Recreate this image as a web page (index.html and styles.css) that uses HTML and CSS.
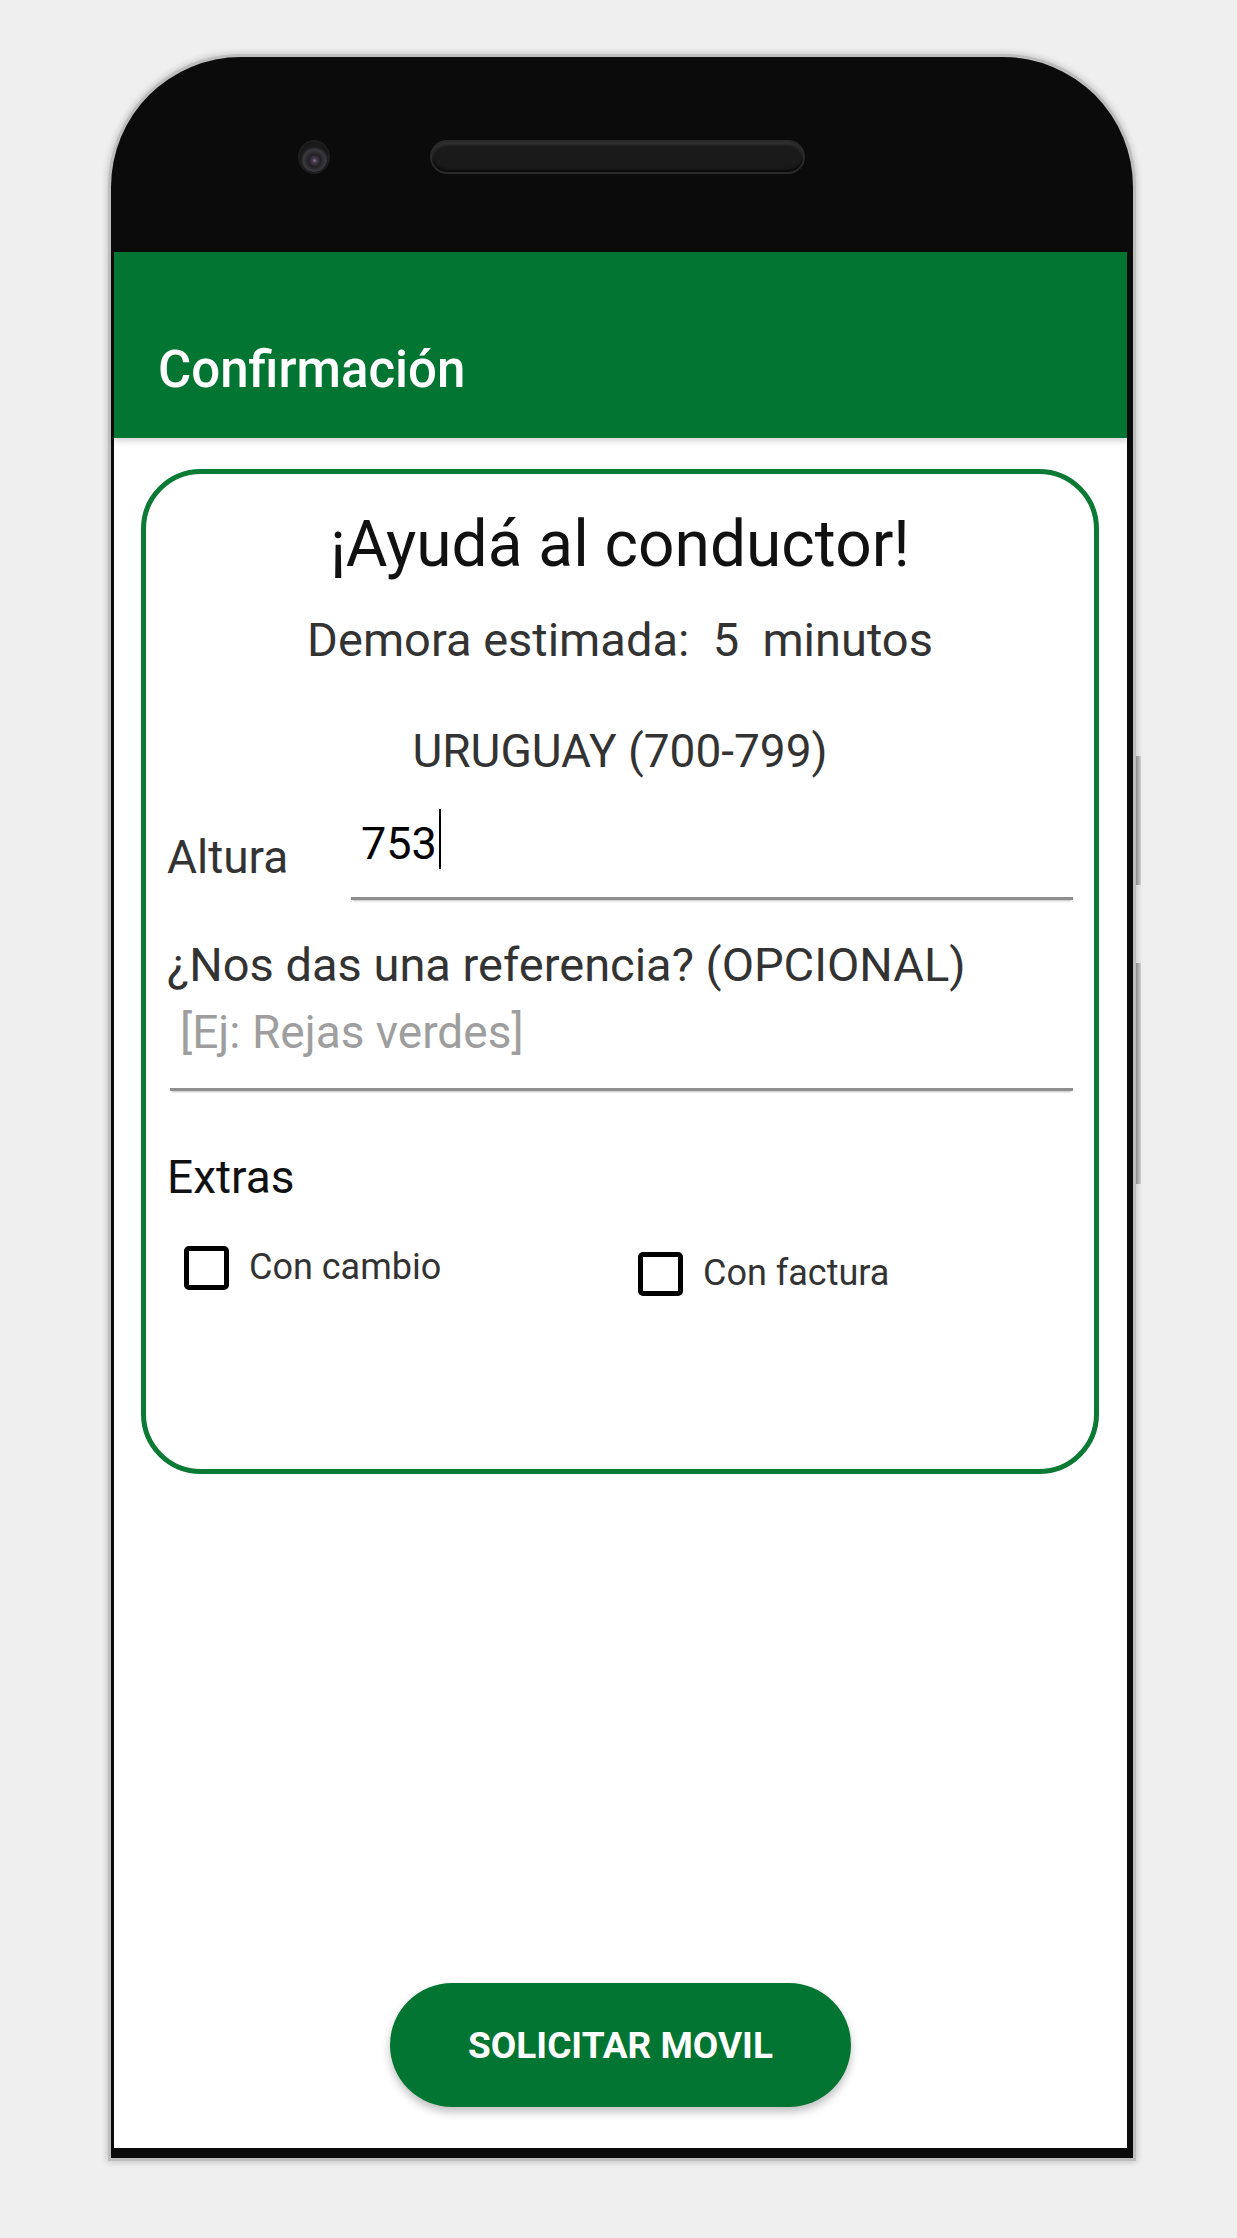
FILE: index.html
```
<!DOCTYPE html>
<html lang="es">
<head>
    <meta charset="UTF-8">
    <meta name="viewport" content="width=device-width, initial-scale=1.0">
    <title>Confirmación</title>
    <link rel="stylesheet" href="styles.css">
</head>
<body>

<div class="phone">
    <div class="bezel">
        <span class="camera"></span>
        <span class="speaker"></span>
    </div>

    <div class="screen">
        <header class="toolbar">
            <h1>Confirmación</h1>
        </header>

        <main class="content">
            <section class="card">
                <h2 class="card-title">¡Ayudá al conductor!</h2>
                <p class="eta">Demora estimada:  5  minutos</p>
                <p class="street">URUGUAY (700-799)</p>

                <div class="field-row">
                    <label class="field-label altura-label">Altura</label>
                    <div class="field field-number">753<span class="cursor"></span></div>
                </div>

                <label class="field-label ref-label">¿Nos das una referencia? (OPCIONAL)</label>
                <div class="field field-ref">
                    <span class="placeholder">[Ej: Rejas verdes]</span>
                </div>

                <p class="extras">Extras</p>
                <div class="checks">
                    <label class="check"><span class="box"></span>Con cambio</label>
                    <label class="check check-low"><span class="box"></span>Con factura</label>
                </div>
            </section>

            <button class="btn-request">SOLICITAR MOVIL</button>
        </main>
    </div>

    <span class="side-btn side-btn-volume"></span>
    <span class="side-btn side-btn-power"></span>
</div>

</body>
</html>
```

FILE: styles.css
```
/* Base */
body {
    margin: 0;
    height: 2238px;
    background-color: #efefef;
    font-family: 'Roboto', 'Liberation Sans', sans-serif;
    overflow: hidden;
}

/* Phone frame */
.phone {
    position: relative;
    width: 1022px;
    margin: 57px 0 0 111px;
    padding: 0 6px 10px 3px;
    box-sizing: border-box;
    background-color: #0b0b0b;
    border-radius: 130px 130px 0 0;
    box-shadow: 0 0 0 3px #bdbdbd, 0 0 6px 4px rgba(0, 0, 0, 0.18);
}
.bezel {
    height: 195px;
    padding: 5px 0 0 186px;
    box-sizing: border-box;
    display: flex;
    align-items: center;
}
.camera {
    width: 28px;
    height: 30px;
    border-radius: 50%;
    background: radial-gradient(circle at 52% 62%, #a07aa0 0, #4a3f52 2px, #222026 6px, #3a3a3e 11px, #1a1a1a 14px);
    box-shadow: 0 0 0 2px #1e1e1e;
}
.speaker {
    width: 371px;
    height: 30px;
    margin-left: 104px;
    border-radius: 15px;
    background-color: #1a1a1a;
    box-shadow: inset 0 3px 3px rgba(255, 255, 255, 0.1), inset 0 -2px 3px rgba(0, 0, 0, 0.7), 0 0 0 2px #2a2a2a;
}
.side-btn {
    position: absolute;
    right: -8px;
    width: 5px;
    background: linear-gradient(to right, #8c8c8c, #cfcfcf);
}
.side-btn-volume {
    top: 699px;
    height: 129px;
}
.side-btn-power {
    top: 906px;
    height: 221px;
}

/* Screen */
.screen {
    height: 1896px;
    background-color: #fff;
    display: flex;
    flex-direction: column;
}
.toolbar {
    position: relative;
    z-index: 1;
    height: 186px;
    flex-shrink: 0;
    padding: 88px 0 0 44px;
    box-sizing: border-box;
    background-color: #037532;
    box-shadow: 0 3px 6px rgba(0, 0, 0, 0.18);
}
.toolbar h1 {
    margin: 0;
    color: #fff;
    font-size: 51px;
    font-weight: 500;
    line-height: 60px;
}
.content {
    flex: 1;
    display: flex;
    flex-direction: column;
}

/* Card */
.card {
    height: 1005px;
    margin: 31px 28px 0 27px;
    padding: 33px 21px 0 21px;
    box-sizing: border-box;
    border: 5px solid #0a7a34;
    border-radius: 60px;
}
.card p {
    margin: 0;
}
.card-title {
    margin: 0;
    color: #111;
    font-size: 64px;
    font-weight: 400;
    line-height: 75px;
    text-align: center;
}
.eta {
    margin-top: 31px !important;
    color: #333;
    font-size: 47px;
    line-height: 54px;
    text-align: center;
    white-space: pre;
}
.street {
    margin-top: 57px !important;
    color: #333;
    font-size: 46px;
    line-height: 54px;
    text-align: center;
}

/* Campos */
.field-row {
    display: flex;
    margin-top: 21px;
}
.field-label {
    display: block;
    color: #333;
    font-size: 46px;
    line-height: 54px;
}
.altura-label {
    width: 184px;
    flex-shrink: 0;
    margin-top: 31px;
}
.field {
    border-bottom: 3px solid #8f8f8f;
    box-shadow: 0 3px 2px -2px rgba(0, 0, 0, 0.25);
}
.field-number {
    flex: 1;
    padding: 18px 0 27px 10px;
    color: #000;
    font-size: 45px;
    line-height: 53px;
}
.cursor {
    display: inline-block;
    width: 0;
    height: 60px;
    margin: -10px 0 0 2px;
    border-left: 2px solid #000;
    vertical-align: -10px;
}
.ref-label {
    margin-top: 38px;
    font-size: 47px;
}
.field-ref {
    margin: 13px 0 0 3px;
    padding: 0 0 29px 10px;
    font-size: 46px;
    line-height: 54px;
}
.placeholder {
    color: #9e9e9e;
}
.extras {
    margin-top: 59px !important;
    color: #111;
    font-size: 46px;
    line-height: 54px;
}

/* Checkboxes */
.checks {
    display: grid;
    grid-template-columns: 454px 1fr;
    margin-top: 42px;
    padding-left: 17px;
}
.check {
    display: flex;
    align-items: flex-start;
    gap: 20px;
    color: #333;
    font-size: 36px;
    line-height: 42px;
}
.check-low {
    margin-top: 6px;
}
.box {
    width: 45px;
    height: 44px;
    box-sizing: border-box;
    border: 5px solid #000;
    border-radius: 5px;
    flex-shrink: 0;
}

/* Boton */
.btn-request {
    align-self: center;
    width: 461px;
    height: 124px;
    margin: auto 0 41px;
    border: none;
    border-radius: 62px;
    background-color: #037532;
    color: #fff;
    font-family: 'Roboto', 'Liberation Sans', sans-serif;
    font-size: 37px;
    font-weight: 700;
    box-shadow: 0 5px 8px rgba(0, 0, 0, 0.25);
    cursor: pointer;
}
```
